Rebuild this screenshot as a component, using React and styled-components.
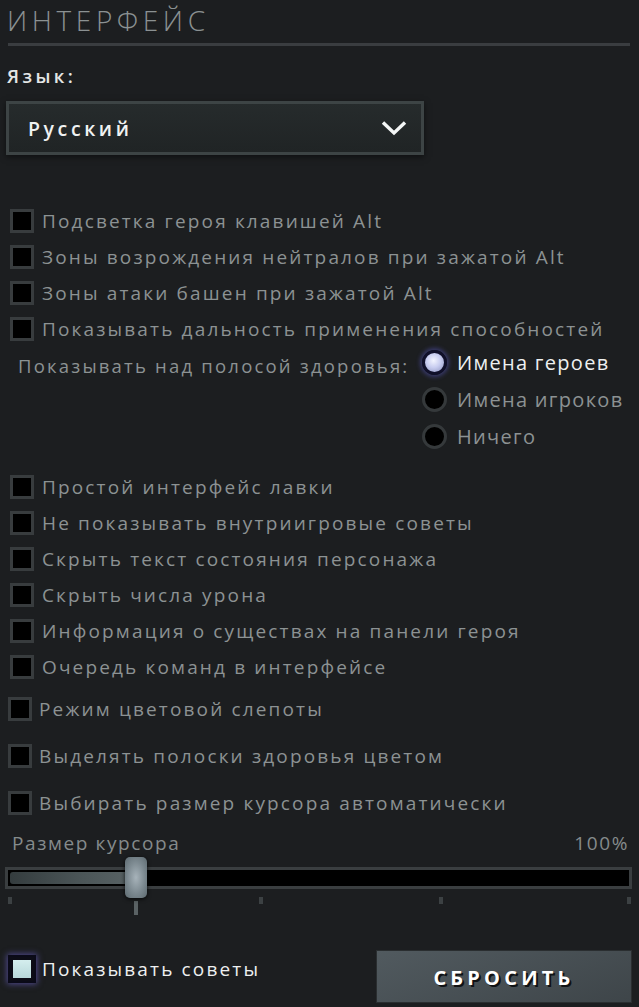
import React from "react";
import styled, { createGlobalStyle } from "styled-components";

const Global = createGlobalStyle`
  html, body { margin: 0; padding: 0; background: #1c1e20; }
  body { font-family: "Open Sans", "Noto Sans", sans-serif; overflow: hidden; }
  * { box-sizing: border-box; }
`;

const Page = styled.div`
  width: 639px;
  height: 1007px;
  background: #1c1e20;
  display: flex;
  flex-direction: column;
  padding: 0 7px 0 7px;
`;

const Title = styled.div`
  font-family: "Open Sans", sans-serif;
  font-weight: 300;
  font-size: 28px;
  letter-spacing: 4.6px;
  color: #8b9192;
  line-height: 40px;
  height: 43px;
`;

const Rule = styled.div`
  height: 3px;
  margin: 0 2px 0 1px;
  background: #3a3d40;
`;

const FieldLabel = styled.div`
  margin-top: 18px;
  font-weight: 600;
  font-size: 18.5px;
  letter-spacing: 3.4px;
  color: #e4e6e6;
  line-height: 24px;
`;

const Select = styled.div`
  margin-top: 13px;
  width: 418px;
  height: 54px;
  margin-left: -1px;
  border: 3px solid #3d4445;
  background: linear-gradient(#262b2c, #202425);
  box-shadow: 0 2px 6px rgba(0, 0, 0, 0.5);
  display: flex;
  align-items: center;
  justify-content: space-between;
  padding: 0 14px 0 19px;
  color: #f0f2f2;
  font-weight: 600;
  font-size: 19.5px;
  letter-spacing: 3.6px;
`;

const List = styled.div`
  margin-top: 48px;
  display: flex;
  flex-direction: column;
`;

const Row = styled.div`
  height: ${(p) => p.$h || 36}px;
  display: flex;
  align-items: center;
  gap: ${(p) => p.$gap ?? 8}px;
  padding-left: ${(p) => p.$indent ?? 3}px;
`;

const Box = styled.div`
  width: 24px;
  height: 24px;
  flex: none;
  border: 3px solid #383c3e;
  background: ${(p) => (p.$on ? "linear-gradient(#d4eeee, #b8d8da)" : "#000")};
  box-shadow: ${(p) =>
    p.$on ? "0 0 0 2px #0a0a18, 0 0 6px 3px rgba(120,110,230,0.55)" : "none"};
  ${(p) => p.$on && "border-color: #0c0c16;"}
`;

const Label = styled.span`
  font-size: ${(p) => (p.$big ? 20 : 19)}px;
  letter-spacing: ${(p) => (p.$big ? 1.3 : 2.15)}px;
  color: ${(p) => (p.$bright ? "#eef0f0" : "#8c9293")};
  white-space: nowrap;
  line-height: 26px;
`;

const RadioSection = styled.div`
  display: grid;
  grid-template-columns: 415px auto;
  margin-bottom: 14px;
`;

const RadioCaption = styled.div`
  padding-left: 11px;
  height: 36px;
  display: flex;
  align-items: center;
  font-size: 18.5px;
  letter-spacing: 2.2px;
  color: #8c9293;
  white-space: nowrap;
`;

const RadioCol = styled.div`
  display: flex;
  flex-direction: column;
  margin-top: -3px;
`;

const RadioRow = styled.div`
  height: 37px;
  display: flex;
  align-items: center;
  gap: 10px;
`;

const Dot = styled.div`
  width: 25px;
  height: 25px;
  flex: none;
  border-radius: 50%;
  border: 3px solid ${(p) => (p.$on ? "#10102a" : "#35393b")};
  background: ${(p) =>
    p.$on
      ? "radial-gradient(circle at 45% 40%, #f2f4ff 0%, #c8cdf0 45%, #8a90bc 100%)"
      : "#000"};
  box-shadow: ${(p) => (p.$on ? "0 0 4px 2px rgba(90,90,200,0.45)" : "none")};
`;

const SliderHead = styled.div`
  margin-top: 3px;
  display: flex;
  justify-content: space-between;
  padding: 0 3px 0 5px;
  font-size: 19px;
  letter-spacing: 1.6px;
  color: #858b8c;
  line-height: 26px;
`;

const SliderWrap = styled.div`
  position: relative;
  margin-top: 1px;
  margin-left: -2px;
  width: 627px;
  height: 58px;
`;

const Track = styled.div`
  position: absolute;
  left: 0;
  right: 0;
  top: 10px;
  height: 22px;
  border: 3px solid #3a3e40;
  background: #000;
  padding: 2px 0 2px 2px;
`;

const Fill = styled.div`
  height: 100%;
  background: linear-gradient(90deg, #343c3e, #4b5557 60%, #576163);
  border-radius: 3px;
`;

const Thumb = styled.div`
  position: absolute;
  top: 0;
  width: 22px;
  height: 41px;
  border-radius: 5px;
  background: radial-gradient(ellipse at 50% 50%, #a7b3ba 0%, #7c8990 55%, #5d6a70 100%);
  box-shadow: 0 1px 4px rgba(0, 0, 0, 0.8);
`;

const Stem = styled.div`
  position: absolute;
  top: 44px;
  width: 4px;
  height: 14px;
  background: #5a6264;
`;

const Tick = styled.div`
  position: absolute;
  top: 40px;
  width: 4px;
  height: 7px;
  background: #3c4143;
`;

const Footer = styled.div`
  margin-top: 35px;
  display: flex;
  justify-content: space-between;
  align-items: flex-start;
`;

const FooterCheck = styled(Row)`
  padding-top: 2px;
`;

const Button = styled.button`
  width: 256px;
  height: 53px;
  border: 1px solid #2a2e30;
  background: linear-gradient(160deg, #515a5f, #3e4549);
  color: #fff;
  font-family: "Open Sans", sans-serif;
  font-weight: 700;
  font-size: 20px;
  letter-spacing: 4.2px;
  text-shadow: 2px 2px 0 #101214;
  padding-top: 2px;
`;

const Chevron = () => (
  <svg width="26" height="16" viewBox="0 0 26 16">
    <polyline
      points="2,2.5 13,13 24,2.5"
      fill="none"
      stroke="#f4f6f6"
      strokeWidth="3.4"
      strokeLinejoin="miter"
    />
  </svg>
);

const Check = ({ text, h, indent, gap }) => (
  <Row $h={h} $indent={indent} $gap={gap}>
    <Box />
    <Label>{text}</Label>
  </Row>
);

const ticks = [3, 254, 434, 622];

export default function App() {
  return (
    <>
      <Global />
      <Page>
        <Title>ИНТЕРФЕЙС</Title>
        <Rule />
        <FieldLabel>Язык:</FieldLabel>
        <Select>
          <span>Русский</span>
          <Chevron />
        </Select>
        <List>
          <Check text="Подсветка героя клавишей Alt" />
          <Check text="Зоны возрождения нейтралов при зажатой Alt" />
          <Check text="Зоны атаки башен при зажатой Alt" />
          <Check text="Показывать дальность применения способностей" />
          <RadioSection>
            <RadioCaption>Показывать над полосой здоровья:</RadioCaption>
            <RadioCol>
              <RadioRow>
                <Dot $on />
                <Label $big $bright>Имена героев</Label>
              </RadioRow>
              <RadioRow>
                <Dot />
                <Label $big>Имена игроков</Label>
              </RadioRow>
              <RadioRow>
                <Dot />
                <Label $big>Ничего</Label>
              </RadioRow>
            </RadioCol>
          </RadioSection>
          <Check text="Простой интерфейс лавки" />
          <Check text="Не показывать внутриигровые советы" />
          <Check text="Скрыть текст состояния персонажа" />
          <Check text="Скрыть числа урона" />
          <Check text="Информация о существах на панели героя" />
          <Check text="Очередь команд в интерфейсе" />
          <Check text="Режим цветовой слепоты" h={48} indent={1} gap={7} />
          <Check text="Выделять полоски здоровья цветом" h={46} indent={1} gap={7} />
          <Check text="Выбирать размер курсора автоматически" h={48} indent={1} gap={7} />
        </List>
        <SliderHead>
          <span>Размер курсора</span>
          <span>100%</span>
        </SliderHead>
        <SliderWrap>
          <Track>
            <Fill style={{ width: "19%" }} />
          </Track>
          {ticks.map((x) => (
            <Tick key={x} style={{ left: x }} />
          ))}
          <Stem style={{ left: 129 }} />
          <Thumb style={{ left: 120 }} />
        </SliderWrap>
        <Footer>
          <FooterCheck $indent={3}>
            <Box $on />
            <Label $bright>Показывать советы</Label>
          </FooterCheck>
          <Button>СБРОСИТЬ</Button>
        </Footer>
      </Page>
    </>
  );
}
